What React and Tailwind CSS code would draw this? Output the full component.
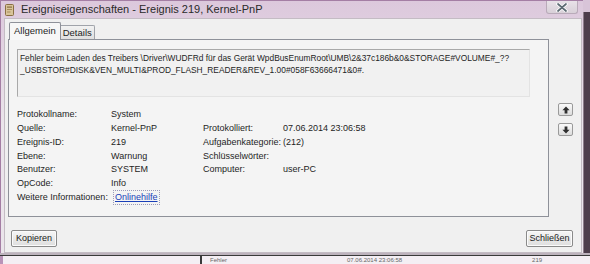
import React from "react";

const FONT = "font-['Segoe_UI','Liberation_Sans',Arial,sans-serif]";

const rows = [
  ["Protokollname:", "System", "", ""],
  ["Quelle:", "Kernel-PnP", "Protokolliert:", "07.06.2014 23:06:58"],
  ["Ereignis-ID:", "219", "Aufgabenkategorie:", "(212)"],
  ["Ebene:", "Warnung", "Schlüsselwörter:", ""],
  ["Benutzer:", "SYSTEM", "Computer:", "user-PC"],
  ["OpCode:", "Info", "", ""],
];

// fat arrow used on the little navigation buttons
const Arrow = ({ down }) => (
  <svg width="8" height="8" viewBox="0 0 8 8" className={down ? "rotate-180" : ""}>
    <path d="M4 0.5 L7.6 4.2 L5.4 4.2 L5.4 7.5 L2.6 7.5 L2.6 4.2 L0.4 4.2 Z" fill="#2f2f2f" />
  </svg>
);

const NavButton = ({ down }) => (
  <div className="w-[15px] h-[13px] flex items-center justify-center rounded-[2px] border border-[#9a9a9a] bg-gradient-to-b from-[#fafafa] to-[#dcdcdc]">
    <Arrow down={down} />
  </div>
);

const WinButton = ({ children, className }) => (
  <div
    className={
      "h-[17px] flex items-center justify-center rounded-[2px] border border-[#8a8a8a] bg-gradient-to-b from-[#f6f6f6] to-[#dedede] text-[9px] text-[#1a1a1a] shadow-[inset_0_0_0_1px_#fbfbfb] " +
      className
    }
  >
    {children}
  </div>
);

const TitleIcon = () => (
  <svg width="9" height="12" viewBox="0 0 9 12">
    <rect x="0.5" y="0.5" width="8" height="11" rx="1" fill="#d8c49a" stroke="#8a6f43" />
    <rect x="2" y="2.5" width="5" height="1.2" fill="#8a6f43" />
    <rect x="2" y="5" width="5" height="1" fill="#a88c5c" />
    <rect x="2" y="7.5" width="3.5" height="1" fill="#a88c5c" />
  </svg>
);

const CloseGlyph = () => (
  <svg width="12" height="9" viewBox="0 0 12 9">
    <path d="M2 1 L10 8 M10 1 L2 8" stroke="#ffffff" strokeWidth="3.4" strokeLinecap="round" />
    <path d="M2 1 L10 8 M10 1 L2 8" stroke="#5d6b73" strokeWidth="1.7" strokeLinecap="round" />
  </svg>
);

export default function App() {
  return (
    <div className={"w-[590px] h-[264px] overflow-hidden flex flex-col bg-[#eee6ee] " + FONT}>
      <div className="flex h-[253px]">
        {/* window */}
        <div className="w-[583px] flex flex-col bg-gradient-to-b from-[#dcc8dc] via-[#ebe5eb] to-[#ebe5eb] border-l border-t border-[#a47ea4]">
          {/* title bar */}
          <div className="h-[17px] flex items-center pl-[4px] pr-[5px]">
            <TitleIcon />
            <span className="ml-[7px] text-[11px] text-[#2a2a2a] leading-none">
              Ereigniseigenschaften - Ereignis 219, Kernel-PnP
            </span>
            <div className="ml-auto self-start w-[32px] h-[13px] flex items-center justify-center rounded-b-[3px] border border-t-0 border-[#b9aab9] bg-gradient-to-b from-[#e8e2e8] to-[#d8d0d8]">
              <CloseGlyph />
            </div>
          </div>

          {/* client area */}
          <div className="ml-[3px] w-[578px] flex-1 flex flex-col bg-[#f0f0f0] border border-[#c4bcc4] text-[9px] text-[#1e1e1e]">
            <div className="flex pt-[3px] pl-[3px]">
              {/* tabs + panel */}
              <div className="w-[541px] flex flex-col">
                <div className="flex items-end h-[18px] -mb-px pl-[1px]">
                  <div className="relative z-10 h-[18px] px-[4px] flex items-center border border-b-0 border-[#8e9199] rounded-t-[2px] bg-[#f7f7f7] text-[9.5px]">
                    Allgemein
                  </div>
                  <div className="h-[15px] px-[2px] flex items-center border border-l-0 border-b-0 border-[#a0a3aa] rounded-tr-[2px] bg-gradient-to-b from-[#f2f2f2] to-[#dedede] text-[9.5px]">
                    Details
                  </div>
                </div>
                <div className="h-[178px] border border-[#8e9199] bg-[#f4f4f4] pl-[8px] pt-[9px]">
                  <div className="w-[513px] h-[48px] border border-[#a9a9a9] border-b-[#e3e3e3] border-r-[#e3e3e3] bg-[#f1f1f1] px-[2px] pt-[2px] leading-[12px] text-[8.4px]">
                    <div className="whitespace-nowrap">
                      Fehler beim Laden des Treibers \Driver\WUDFRd für das Gerät WpdBusEnumRoot\UMB\2&amp;37c186b&amp;0&amp;STORAGE#VOLUME#_??
                    </div>
                    <div className="whitespace-nowrap">
                      _USBSTOR#DISK&amp;VEN_MULTI&amp;PROD_FLASH_READER&amp;REV_1.00#058F63666471&amp;0#.
                    </div>
                  </div>

                  <div className="mt-[11px] flex flex-col">
                    {rows.map((r, i) => (
                      <div key={i} className="h-[13.8px] flex items-center whitespace-nowrap">
                        <span className="w-[94px]">{r[0]}</span>
                        <span className="w-[92px]">{r[1]}</span>
                        <span className="w-[80px]">{r[2]}</span>
                        <span>{r[3]}</span>
                      </div>
                    ))}
                    <div className="h-[13.8px] flex items-center whitespace-nowrap">
                      <span className="w-[97px]">Weitere Informationen:</span>
                      <span className="px-[1px] outline outline-1 outline-dotted outline-[#9a9ab8] text-[#1a3fb8] underline">
                        Onlinehilfe
                      </span>
                    </div>
                  </div>
                </div>
              </div>

              {/* navigation buttons */}
              <div className="ml-[9px] pt-[81px] flex flex-col gap-[7px]">
                <NavButton />
                <NavButton down />
              </div>
            </div>

            {/* bottom buttons */}
            <div className="mt-[13px] flex justify-between pl-[6px] pr-[8px]">
              <WinButton className="w-[46px]">Kopieren</WinButton>
              <WinButton className="w-[47px]">Schließen</WinButton>
            </div>
          </div>
        </div>

        {/* right frame edge */}
        <div className="flex-1 flex flex-col">
          <div className="h-[12px] bg-[#d8c4d8]" />
          <div className="flex-1 bg-[#4e3e4c] border-l border-[#8d7d8b]" />
        </div>
      </div>

      {/* window behind, bottom strip */}
      <div className="flex-1 flex flex-col">
        <div className="h-[2px] bg-[#bdb3bd]" />
        <div className="h-[1px] bg-[#3a3a3a]" />
        <div className="flex-1 flex items-center bg-[#f4eff4] border-l-[3px] border-[#b893b8] text-[6px] text-[#666] leading-[8px] overflow-hidden">
          <div className="ml-[197px] w-[2px] h-full bg-[#3a3a3a]" />
          <span className="ml-[8px]">Fehler</span>
          <span className="ml-[120px]">07.06.2014 23:06:58</span>
          <span className="ml-[130px]">219</span>
        </div>
      </div>
    </div>
  );
}
